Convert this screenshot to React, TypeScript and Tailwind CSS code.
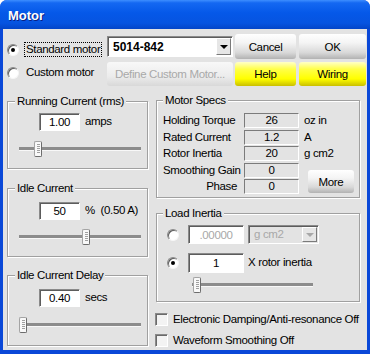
import React from "react";

const font = { fontFamily: '"Liberation Sans", Arial, sans-serif' };

function Radio({ checked }: { checked?: boolean }) {
  return (
    <span className="flex size-[12px] shrink-0 items-center justify-center rounded-full border border-[#8a8a8a] border-b-[#f6f6f6] border-r-[#f6f6f6] bg-white shadow-[inset_1px_1px_0_#5c5c5c]">
      {checked && <span className="size-[4px] rounded-full bg-black" />}
    </span>
  );
}

function Check({ label }: { label: string }) {
  return (
    <div className="flex items-center">
      <span className="-ml-[1px] size-[13px] shrink-0 border border-[#8a8a8a] border-b-white border-r-white bg-[#f3f3f3] shadow-[inset_1px_1px_0_#6a6a6a]" />
      <span className="ml-[5px] leading-[14px]">{label}</span>
    </div>
  );
}

function Edit({ value, className, disabled }: { value: string; className: string; disabled?: boolean }) {
  return (
    <div
      className={`flex items-center justify-center border border-[#8a8a8a] border-b-white border-r-white bg-white leading-[14px] shadow-[inset_1px_1px_0_#5c5c5c] ${
        disabled ? "text-[#a8a8a8]" : "text-black"
      } ${className}`}
    >
      {value}
    </div>
  );
}

function Spec({ value }: { value: string }) {
  return (
    <div className="flex h-[15px] items-center justify-center border border-[#7b7b7b] border-b-white border-r-white leading-[13px]">
      {value}
    </div>
  );
}

function Arrow({ disabled }: { disabled?: boolean }) {
  return (
    <div className="flex h-full w-[15px] items-center justify-center border border-white border-b-[#7a7a7a] border-r-[#7a7a7a] bg-[#e6e6e6]">
      <span
        className={`h-0 w-0 border-x-[4px] border-t-[4px] border-x-transparent ${
          disabled ? "border-t-[#a8a8a8]" : "border-t-black"
        }`}
      />
    </div>
  );
}

function Combo({ value, className, disabled }: { value: string; className: string; disabled?: boolean }) {
  return (
    <div
      className={`flex items-stretch border border-[#8a8a8a] border-b-white border-r-white p-[1px] shadow-[inset_1px_1px_0_#5c5c5c] ${
        disabled ? "bg-[#e3e3e3] text-[#a8a8a8]" : "bg-white font-bold text-black"
      } ${className}`}
    >
      <span className={`flex flex-1 items-center pl-[4px] ${disabled ? "" : "text-[12px] tracking-normal"}`}>
        {value}
      </span>
      <Arrow disabled={disabled} />
    </div>
  );
}

function Btn({
  children,
  className,
  tone = "gray",
}: {
  children: React.ReactNode;
  className: string;
  tone?: "gray" | "yellow" | "off";
}) {
  const tones = {
    gray: "bg-[linear-gradient(180deg,#ffffff_0%,#f4f4f4_35%,#d8d8d8_75%,#b2b2b2_100%)] text-black",
    yellow: "bg-[linear-gradient(180deg,#ffffc8_0%,#ffff48_30%,#ffff00_70%,#c9bf00_100%)] text-black",
    off: "bg-[linear-gradient(180deg,#f8f8f8_0%,#ececec_60%,#d8d8d8_100%)] text-[#a9a9a9]",
  };
  return (
    <div className={`flex items-center justify-center rounded-[3px] leading-[14px] ${tones[tone]} ${className}`}>
      {children}
    </div>
  );
}

function Slider({ className, at }: { className: string; at: number }) {
  return (
    <div className={`relative h-[16px] ${className}`}>
      <div className="absolute inset-x-0 top-[6px] h-[4px] border-b border-[#f8f8f8] bg-[#8c8c8c]" />
      <div
        className="absolute top-0 flex h-[16px] w-[8px] justify-end rounded-[2px] border border-[#a4a4a4] border-b-[#6c6c6c] border-r-[#6c6c6c] bg-[#f9f9f9] py-[2px] pr-[1px]"
        style={{ left: at }}
      >
        <div className="h-full w-[3px] bg-[repeating-linear-gradient(180deg,#a0a0a0_0px,#a0a0a0_1px,transparent_1px,transparent_2px)]" />
      </div>
    </div>
  );
}

function Group({
  title,
  className,
  titleClass,
  children,
}: {
  title: string;
  className: string;
  titleClass: string;
  children: React.ReactNode;
}) {
  return (
    <div className={`border border-[#a0a0a0] shadow-[inset_1px_1px_0_#fff,1px_1px_0_#fff] ${className}`}>
      <div className={`-mt-[8px] w-fit bg-[#e3e3e3] px-[2px] leading-[14px] ${titleClass}`}>{title}</div>
      {children}
    </div>
  );
}

export default function App() {
  return (
    <div
      style={font}
      className="flex h-[354px] w-[370px] flex-col overflow-hidden whitespace-nowrap rounded-t-[7px] bg-[#0a48d8] text-[11.5px] tracking-[-0.35px] text-black"
    >
      <div className="flex h-[29px] shrink-0 items-center bg-[linear-gradient(180deg,#3d8eff_0%,#1468f2_10%,#0558e8_45%,#0654e0_80%,#0345c8_100%)] pl-[8px] pt-[3px]">
        <span className="text-[13px] font-bold tracking-normal text-white [text-shadow:1px_1px_0_#0b1f80]">
          Motor
        </span>
      </div>

      <div className="mx-[3px] mb-[4px] flex-1 bg-[#e3e3e3] pl-[4px] pt-[5px]">
        {/* top area */}
        <div className="flex">
          <div className="flex w-[100px] flex-col">
            <div className="mt-[8px] flex h-[15px] items-center">
              <Radio checked />
              <span className="ml-[5px] border border-dotted border-black px-[1px] leading-[13px]">Standard motor</span>
            </div>
            <div className="mt-[8px] flex h-[15px] items-center">
              <Radio />
              <span className="ml-[7px] leading-[13px]">Custom motor</span>
            </div>
          </div>
          <div className="flex w-[128px] flex-col">
            <Combo value="5014-842" className="mt-[2px] h-[21px] w-[126px]" />
            <Btn tone="off" className="mt-[5px] h-[24px] w-[126px]">
              Define Custom Motor...
            </Btn>
          </div>
          <div className="grid grid-cols-[61px_67px] grid-rows-[25px_24px] gap-x-[3px] gap-y-[3px]">
            <Btn className="h-full w-full">Cancel</Btn>
            <Btn className="h-full w-full">OK</Btn>
            <Btn tone="yellow" className="h-full w-full">
              Help
            </Btn>
            <Btn tone="yellow" className="h-full w-full">
              Wiring
            </Btn>
          </div>
        </div>

        {/* groups */}
        <div className="flex">
          <div className="flex w-[141px] flex-col">
            <Group title="Running Current (rms)" className="mt-[15px] h-[68px]" titleClass="ml-[7px]">
              <div className="ml-[31px] mt-[5px] flex items-center">
                <Edit value="1.00" className="h-[18px] w-[41px]" />
                <span className="ml-[5px]">amps</span>
              </div>
              <Slider className="ml-[11px] mt-[10px] w-[122px]" at={15} />
            </Group>
            <Group title="Idle Current" className="mt-[19px] h-[69px]" titleClass="ml-[7px]">
              <div className="ml-[31px] mt-[7px] flex items-center">
                <Edit value="50" className="h-[18px] w-[41px]" />
                <span className="ml-[5px]">%&nbsp; (0.50 A)</span>
              </div>
              <Slider className="ml-[11px] mt-[9px] w-[122px]" at={63} />
            </Group>
            <Group title="Idle Current Delay" className="mt-[18px] h-[71px]" titleClass="ml-[7px]">
              <div className="ml-[31px] mt-[7px] flex items-center">
                <Edit value="0.40" className="h-[18px] w-[41px]" />
                <span className="ml-[5px]">secs</span>
              </div>
              <Slider className="ml-[11px] mt-[10px] w-[122px]" at={0} />
            </Group>
          </div>

          <div className="ml-[8px] flex w-[204px] flex-col">
            <Group title="Motor Specs" className="mt-[14px] h-[98px]" titleClass="ml-[6px]">
              <div className="ml-[6px] mt-[6px] grid grid-cols-[81px_55px_1fr] grid-rows-[15px_15px_15px_15px_15px] gap-y-[1.5px] leading-[15px]">
                <span>Holding Torque</span>
                <Spec value="26" />
                <span className="pl-[5px]">oz in</span>
                <span>Rated Current</span>
                <Spec value="1.2" />
                <span className="pl-[5px]">A</span>
                <span>Rotor Inertia</span>
                <Spec value="20" />
                <span className="pl-[5px]">g cm2</span>
                <span>Smoothing Gain</span>
                <Spec value="0" />
                <div className="row-span-2 flex items-end pb-[1px] pl-[9px]">
                  <Btn className="h-[23px] w-[46px]">More</Btn>
                </div>
                <span className="pr-[7px] text-right">Phase</span>
                <Spec value="0" />
              </div>
            </Group>

            <Group title="Load Inertia" className="mt-[15px] h-[89px]" titleClass="ml-[6px]">
              <div className="mt-[5px] flex items-center pl-[10px]">
                <Radio />
                <Edit value=".00000" disabled className="ml-[9px] h-[19px] w-[56px]" />
                <Combo value="g cm2" disabled className="ml-[4px] h-[19px] w-[71px]" />
              </div>
              <div className="mt-[9px] flex items-center pl-[10px]">
                <Radio checked />
                <Edit value="1" className="ml-[9px] h-[20px] w-[56px]" />
                <span className="ml-[4px]">X rotor inertia</span>
              </div>
              <Slider className="ml-[35px] mt-[4px] w-[121px]" at={1} />
            </Group>

            <div className="mt-[10px]">
              <Check label="Electronic Damping/Anti-resonance Off" />
            </div>
            <div className="mt-[7px]">
              <Check label="Waveform Smoothing Off" />
            </div>
          </div>
        </div>
      </div>
    </div>
  );
}
